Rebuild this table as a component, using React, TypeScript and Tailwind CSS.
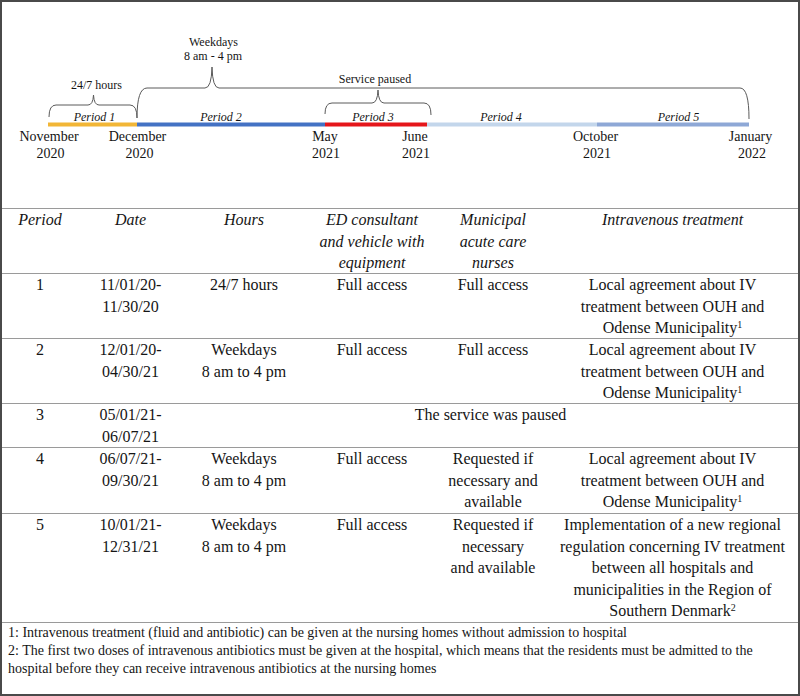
const serif = "font-['Liberation_Serif','Times_New_Roman',serif]";
const rowCls = "grid grid-cols-[76px_105px_122px_134px_108px_1fr] border-t border-[#9a9a9a] text-center";

function Timeline() {
  return (
    <svg width="796" height="206" viewBox="2 2 796 206" className="block">
      {/* braces */}
      <g stroke="#5a5a5a" strokeWidth="1" fill="none">
        <path d="M49,117 Q49,105 56,105 L88,105 Q93,105 93.5,95 Q94,105 99,105 L130,105 Q137,105 137,118" />
        <path d="M137,118 Q137,88 147,88 L205,88 Q211.5,88 212,67 Q212.5,88 219,88 L740,88 Q749,88 749,119" />
        <path d="M325,114 Q325,103 332,103 L372,103 Q377.5,103 378,90 Q378.5,103 384,103 L424,103 Q431,103 431,115" />
      </g>
      {/* bar */}
      <rect x="48" y="122.5" width="89" height="4" fill="#f2b636" />
      <rect x="137" y="122.5" width="188" height="4" fill="#4472c4" />
      <rect x="325" y="122.5" width="102" height="4" fill="#e5161b" />
      <rect x="427" y="122.5" width="170" height="4" fill="#c3d6eb" />
      <rect x="597" y="122.5" width="152" height="4" fill="#8ea8d6" />
      <g fontFamily="'Liberation Serif', 'Times New Roman', serif" fill="#151515" textAnchor="middle">
        <g fontSize="12">
          <text x="96.5" y="89">24/7 hours</text>
          <text x="213.5" y="46">Weekdays</text>
          <text x="213" y="60">8 am - 4 pm</text>
          <text x="375" y="83">Service paused</text>
        </g>
        <g fontSize="12" fontStyle="italic">
          <text x="94.5" y="120.5">Period 1</text>
          <text x="221" y="120.5">Period 2</text>
          <text x="373" y="120.5">Period 3</text>
          <text x="501" y="120.5">Period 4</text>
          <text x="678.5" y="120.5">Period 5</text>
        </g>
        <g fontSize="14">
          <text x="49" y="141">November</text>
          <text x="50.5" y="157.5">2020</text>
          <text x="137.5" y="141">December</text>
          <text x="139.5" y="157.5">2020</text>
          <text x="325" y="141">May</text>
          <text x="326" y="157.5">2021</text>
          <text x="415" y="141">June</text>
          <text x="416" y="157.5">2021</text>
          <text x="595.5" y="141">October</text>
          <text x="597" y="157.5">2021</text>
          <text x="750.5" y="141">January</text>
          <text x="752" y="157.5">2022</text>
        </g>
      </g>
    </svg>
  );
}

function Sup({ n }: { n: string }) {
  return <sup className="text-[10px]">{n}</sup>;
}

export default function App() {
  return (
    <div className={`w-[800px] h-[696px] bg-white border-2 border-[#4a4a4a] text-[#151515] ${serif} overflow-hidden`}>
      <Timeline />

      <div className="text-[16px] leading-[21.5px]">
        {/* header */}
        <div className={`${rowCls} h-[65px] italic`}>
          <div>Period</div>
          <div>Date</div>
          <div>Hours</div>
          <div>ED consultant<br />and vehicle with<br />equipment</div>
          <div>Municipal<br />acute care<br />nurses</div>
          <div>Intravenous treatment</div>
        </div>

        <div className={`${rowCls} h-[65px]`}>
          <div>1</div>
          <div>11/01/20-<br />11/30/20</div>
          <div>24/7 hours</div>
          <div>Full access</div>
          <div>Full access</div>
          <div>Local agreement about IV<br />treatment between OUH and<br />Odense Municipality<Sup n="1" /></div>
        </div>

        <div className={`${rowCls} h-[65px]`}>
          <div>2</div>
          <div>12/01/20-<br />04/30/21</div>
          <div>Weekdays<br />8 am to 4 pm</div>
          <div>Full access</div>
          <div>Full access</div>
          <div>Local agreement about IV<br />treatment between OUH and<br />Odense Municipality<Sup n="1" /></div>
        </div>

        <div className={`${rowCls} h-[44px]`}>
          <div>3</div>
          <div>05/01/21-<br />06/07/21</div>
          <div className="col-span-4">The service was paused</div>
        </div>

        <div className={`${rowCls} h-[66px]`}>
          <div>4</div>
          <div>06/07/21-<br />09/30/21</div>
          <div>Weekdays<br />8 am to 4 pm</div>
          <div>Full access</div>
          <div>Requested if<br />necessary and<br />available</div>
          <div>Local agreement about IV<br />treatment between OUH and<br />Odense Municipality<Sup n="1" /></div>
        </div>

        <div className={`${rowCls} h-[109px]`}>
          <div>5</div>
          <div>10/01/21-<br />12/31/21</div>
          <div>Weekdays<br />8 am to 4 pm</div>
          <div>Full access</div>
          <div>Requested if<br />necessary<br />and available</div>
          <div>Implementation of a new regional<br />regulation concerning IV treatment<br />between all hospitals and<br />municipalities in the Region of<br />Southern Denmark<Sup n="2" /></div>
        </div>

        {/* footnotes */}
        <div className="border-t border-[#9a9a9a] pl-[6px] pt-px text-[14px] leading-[18px] whitespace-nowrap">
          <div>1: Intravenous treatment (fluid and antibiotic) can be given at the nursing homes without admission to hospital</div>
          <div>2: The first two doses of intravenous antibiotics must be given at the hospital, which means that the residents must be admitted to the</div>
          <div>hospital before they can receive intravenous antibiotics at the nursing homes</div>
        </div>
      </div>
    </div>
  );
}
